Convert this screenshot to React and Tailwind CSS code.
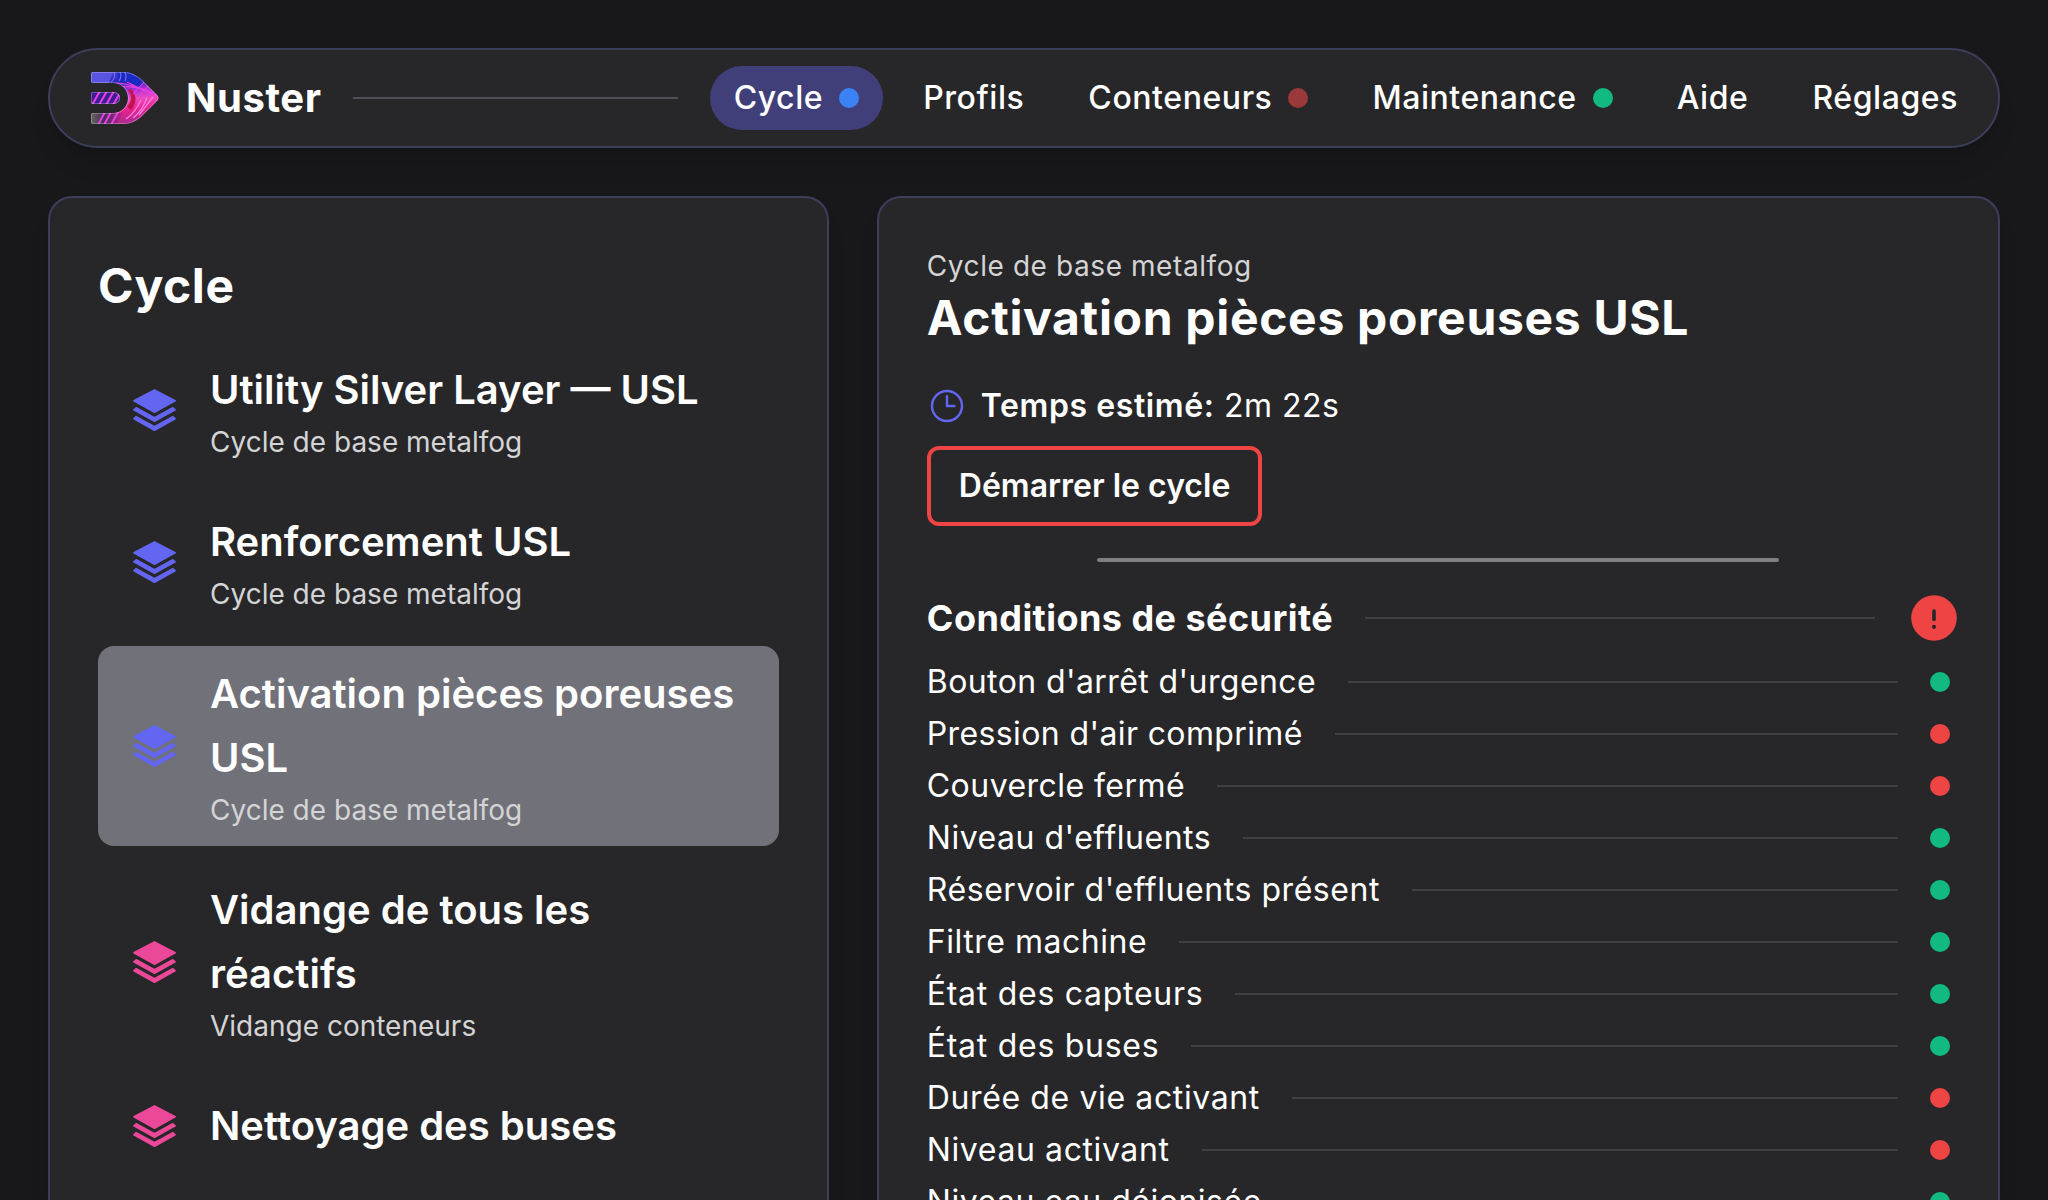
const nav = [
  { label: "Cycle", dot: "bg-[#3b82f6]", active: true },
  { label: "Profils" },
  { label: "Conteneurs", dot: "bg-[#9b383a]" },
  { label: "Maintenance", dot: "bg-[#12b981]" },
  { label: "Aide" },
  { label: "Réglages" },
];

const cycles = [
  { title: "Utility Silver Layer — USL", sub: "Cycle de base metalfog", color: "text-[#6366f1]" },
  { title: "Renforcement USL", sub: "Cycle de base metalfog", color: "text-[#6366f1]" },
  { title: "Activation pièces poreuses USL", sub: "Cycle de base metalfog", color: "text-[#6366f1]", active: true },
  { title: "Vidange de tous les réactifs", sub: "Vidange conteneurs", color: "text-[#ec4899]" },
  { title: "Nettoyage des buses", color: "text-[#ec4899]" },
];

const conditions = [
  { label: "Bouton d'arrêt d'urgence", ok: true, tracking: "tracking-[0.41px]" },
  { label: "Pression d'air comprimé", ok: false, tracking: "tracking-[0.38px]" },
  { label: "Couvercle fermé", ok: false, tracking: "tracking-[0.45px]" },
  { label: "Niveau d'effluents", ok: true, tracking: "tracking-[0.51px]" },
  { label: "Réservoir d'effluents présent", ok: true, tracking: "tracking-[0.56px]" },
  { label: "Filtre machine", ok: true, tracking: "tracking-[0.52px]" },
  { label: "État des capteurs", ok: true, tracking: "tracking-[0.72px]" },
  { label: "État des buses", ok: true, tracking: "tracking-[0.72px]" },
  { label: "Durée de vie activant", ok: false, tracking: "tracking-[0.62px]" },
  { label: "Niveau activant", ok: false, tracking: "tracking-[0.6px]" },
  { label: "Niveau eau déionisée", ok: true, tracking: "tracking-[0.5px]" },
];

function Logo() {
  return (
    <svg width="68" height="52" viewBox="0 0 68 52" className="shrink-0">
      <defs>
        <linearGradient id="body" x1="0" y1="0" x2="0.15" y2="1">
          <stop offset="0" stopColor="#4a46d8" />
          <stop offset="0.26" stopColor="#2a25b8" />
          <stop offset="0.42" stopColor="#a82fd6" />
          <stop offset="0.6" stopColor="#ee4cc0" />
          <stop offset="0.8" stopColor="#e8228c" />
          <stop offset="1" stopColor="#b52a90" />
        </linearGradient>
        <linearGradient id="foot" x1="0" y1="0" x2="1" y2="0">
          <stop offset="0" stopColor="#66665f" />
          <stop offset="0.4" stopColor="#4a2a60" />
          <stop offset="1" stopColor="#c0258f" />
        </linearGradient>
        <clipPath id="shape">
          <path d="M2 0H32C40 0 45 3 50 7L66 23Q69 26 66 29L50 45C45 49 40 52 32 52H2Q0 52 0 50V43Q0 41 2 41H22C31 41 37 34 37 26S31 11 22 11H2Q0 11 0 9V2Q0 0 2 0Z" />
          <path d="M2 20H23Q29 21 29 26T23 32H2Q0 32 0 30V22Q0 20 2 20Z" />
        </clipPath>
      </defs>
      <g clipPath="url(#shape)">
        <rect width="68" height="52" fill="url(#body)" />
        <path d="M0 0H22L18 11H0Z" fill="#5a55e0" />
        <path d="M26 0H40L52 10L48 15L28 9Z" fill="#1a2bc4" />
        <path d="M0 20H30V32H0Z" fill="#3d1d94" />
        <path d="M0 41H32L26 52H0Z" fill="url(#foot)" />
        <path d="M37 18Q44 26 36 35L40 38Q49 27 40 17Z" fill="#c41150" />
        <g fill="none" stroke="#ea3fe0" strokeWidth="2">
          <path d="M1 33L9 19M8 33L16 19M15 33L23 19M22 33L29 21" />
          <path d="M7 53L14 40M13 53L20 40M20 53L27 40" />
          <path d="M24 11Q40 11 66 24M30 15Q44 13 62 21M36 10L60 22M42 22L53 10M48 24L58 13" strokeWidth="1.1" />
        </g>
        <g fill="none" stroke="#ff7be0" strokeWidth="1.4">
          <path d="M35 47Q44 41 50 28M42 46Q51 39 56 26M48 43L62 25" />
        </g>
        <path d="M20 10Q25 6 23 0M28 9Q31 5 29 0M34 9Q36 5 34 0" fill="none" stroke="#7468ee" strokeWidth="1.2" />
        <path
          d="M2 0H32C40 0 45 3 50 7L66 23Q69 26 66 29L50 45C45 49 40 52 32 52H2Q0 52 0 50V43Q0 41 2 41H22C31 41 37 34 37 26S31 11 22 11H2Q0 11 0 9V2Q0 0 2 0ZM2 20H23Q29 21 29 26T23 32H2Q0 32 0 30V22Q0 20 2 20Z"
          fill="none"
          stroke="#e6dcf8"
          strokeOpacity="0.4"
          strokeWidth="1.6"
        />
      </g>
    </svg>
  );
}

function LayersIcon({ className }) {
  return (
    <svg
      className={className}
      viewBox="0 0 43 42"
      fill="currentColor"
      stroke="currentColor"
      strokeWidth="1.6"
      strokeLinejoin="round"
    >
      <path d="M21.5 0.9L42.1 11.8L21.5 23.4L0.9 11.8Z" />
      <path d="M3.2 18.8L21.5 28.7L39.8 18.8L42.1 20.9L21.5 32.4L0.9 20.9Z" />
      <path d="M3.2 27.7L21.5 37.6L39.8 27.7L42.1 29.8L21.5 41.2L0.9 29.8Z" />
    </svg>
  );
}

function Header() {
  return (
    <header className="flex h-[100px] shrink-0 items-center rounded-full border-2 border-[#3d3d5c] bg-[#27272a] pr-4 pl-[41px] shadow-xl">
      <Logo />
      <span className="ml-[27px] text-[40px] font-bold tracking-[0.55px]">Nuster</span>
      <div className="mx-8 h-0.5 flex-1 bg-[#504d57]" />
      <nav className="flex gap-4">
        {nav.map((n) => (
          <div
            key={n.label}
            className={
              n.active
                ? "flex h-16 items-center gap-4 rounded-full bg-[#413f7a] px-6"
                : "flex h-16 items-center gap-4 rounded-full px-6"
            }
          >
            <span className="text-[32px] font-medium tracking-[0.57px]">{n.label}</span>
            {n.dot && <span className={"size-5 rounded-full " + n.dot} />}
          </div>
        ))}
      </nav>
    </header>
  );
}

function CycleList() {
  return (
    <section className="w-2/5 shrink-0 rounded-t-3xl border-2 border-b-0 border-[#3d3d5c] bg-[#27272a] p-12 shadow-xl">
      <h1 className="mt-2 mb-6 text-[48px] leading-[64px] font-bold tracking-[0.6px]">Cycle</h1>
      <div className="flex flex-col gap-4">
        {cycles.map((c) => (
          <div
            key={c.title}
            className={
              c.active
                ? "flex items-center gap-8 rounded-2xl bg-[#71717a] px-8 py-4"
                : "flex items-center gap-8 rounded-2xl px-8 py-4"
            }
          >
            <div className="flex size-12 shrink-0 items-center justify-center">
              <LayersIcon className={"h-[42px] w-[43px] " + c.color} />
            </div>
            <div>
              <div className="text-[40px] leading-[64px] font-semibold">{c.title}</div>
              {c.sub && <div className="text-[28px] leading-10 text-[#d4d4d4]">{c.sub}</div>}
            </div>
          </div>
        ))}
      </div>
    </section>
  );
}

function CycleDetail() {
  return (
    <section className="min-w-0 flex-1 rounded-t-3xl border-2 border-b-0 border-[#3d3d5c] bg-[#27272a] p-12 shadow-xl">
      <div className="text-[28px] leading-10 tracking-[0.58px] text-[#d4d4d4]">Cycle de base metalfog</div>
      <h2 className="text-[48px] leading-[64px] font-bold tracking-[0.68px]">Activation pièces poreuses USL</h2>
      <div className="mt-8 flex items-center gap-[14px] text-[32px] leading-12 tracking-[0.5px]">
        <svg
          className="size-10 text-[#6366f1]"
          viewBox="0 0 40 40"
          fill="none"
          stroke="currentColor"
          strokeWidth="2.4"
          strokeLinecap="round"
          strokeLinejoin="round"
        >
          <circle cx="20" cy="20" r="15" />
          <path d="M20 10.3V20H27.4" />
        </svg>
        <p>
          <b className="font-semibold tracking-[0.58px]">Temps estimé:</b> 2m 22s
        </p>
      </div>
      <button className="mt-4 h-20 rounded-xl border-4 border-[#ef4444] px-7 text-[32px] font-semibold">
        Démarrer le cycle
      </button>
      <div className="mx-auto mt-8 h-1 w-[682px] rounded-full bg-[#808080]" />
      <div className="-mr-[11px] mt-[30px] flex h-[52px] items-center">
        <h3 className="text-[36px] font-bold tracking-[0.45px]">Conditions de sécurité</h3>
        <div className="mx-8 h-0.5 flex-1 bg-[#3f3f46]" />
        <svg className="size-[54px]" viewBox="0 0 54 54">
          <circle cx="27" cy="27" r="22.8" fill="#ef4444" />
          <path d="M27 20V28.4" stroke="#27272a" strokeWidth="3.6" strokeLinecap="round" />
          <circle cx="27" cy="35.8" r="2.1" fill="#27272a" />
        </svg>
      </div>
      <div className="mt-[14px] flex flex-col gap-1">
        {conditions.map((c) => (
          <div key={c.label} className="flex h-12 items-center">
            <span className={"text-[32px] " + c.tracking}>{c.label}</span>
            <div className="mx-8 h-0.5 flex-1 bg-[#3f3f46]" />
            <span className={c.ok ? "size-5 rounded-full bg-[#12b981]" : "size-5 rounded-full bg-[#ef4444]"} />
          </div>
        ))}
      </div>
    </section>
  );
}

export default function App() {
  return (
    <div className="flex h-[1200px] w-[2048px] flex-col gap-12 overflow-hidden bg-[#18181b] px-12 pt-12 font-[Inter,sans-serif] text-white">
      <Header />
      <main className="flex min-h-0 flex-1 gap-12">
        <CycleList />
        <CycleDetail />
      </main>
    </div>
  );
}
